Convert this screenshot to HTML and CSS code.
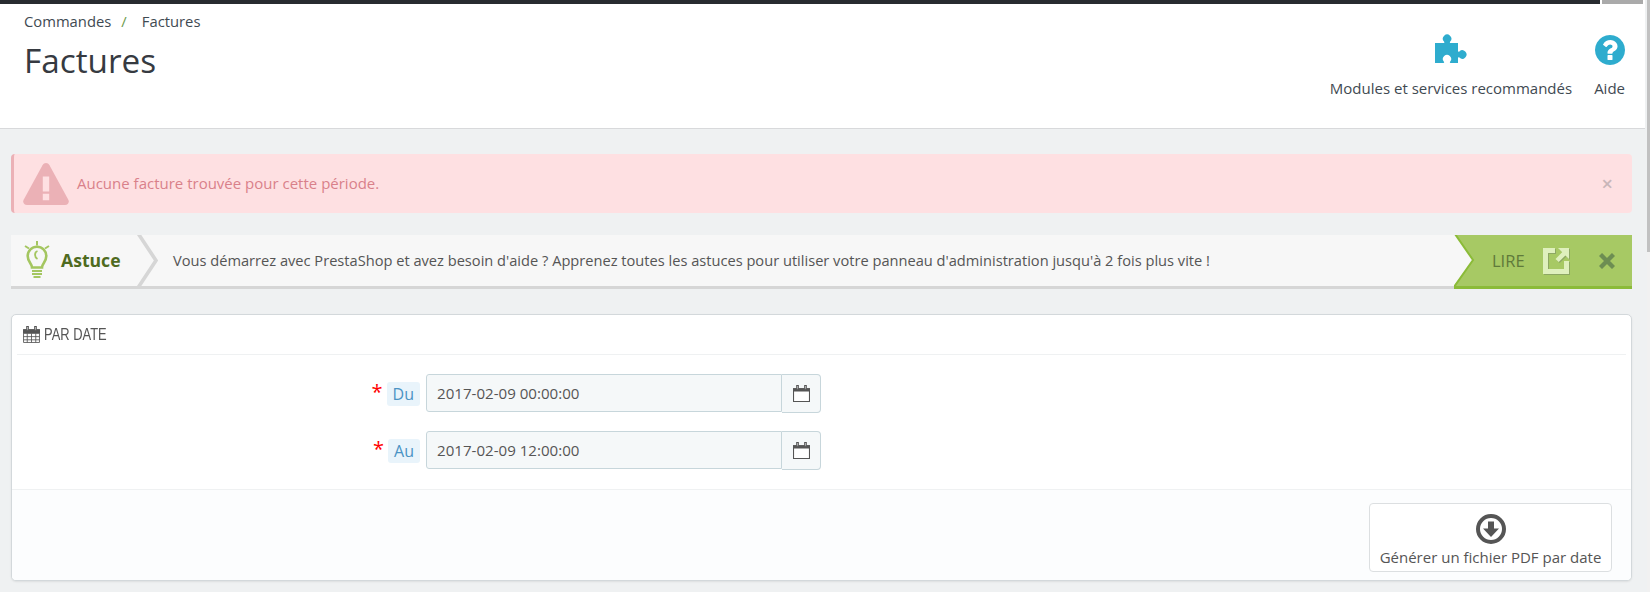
FILE: index.html
```html
<!DOCTYPE html>
<html lang="fr">
<head>
<meta charset="utf-8">
<title>Factures</title>
<link rel="stylesheet" href="styles.css">
</head>
<body>
<div class="app">
  <div class="page">
    <div class="topbar"><div class="topbar-dark"></div><div class="topbar-gray"></div></div>
    <header class="head">
      <div class="head-left">
        <nav class="crumbs"><span>Commandes</span><span class="crumb-sep">/</span><span>Factures</span></nav>
        <h1 class="title">Factures</h1>
      </div>
      <div class="head-actions">
        <a class="action action-modules">
          <svg class="icon-puzzle" viewBox="0 0 33 30"><path fill="#2eacce" d="M0 10h8.600c.8 0 1-.7.400-1.400a4.200 4.200 0 1 1 6.200 0c-.6.700-.4 1.400.4 1.400H23v8c0 .8.700 1 1.400.4a4.200 4.200 0 1 1 0 6.200c-.7-.6-1.400-.4-1.400.4V30h-7.400c-.8 0-1-.7-.5-1.300a4.100 4.100 0 1 0-6.200 0c.5.600.3 1.300-.5 1.300H0z"/></svg>
          <span>Modules et services recommandés</span>
        </a>
        <a class="action action-help">
          <svg class="icon-help" viewBox="128 128 1536 1536"><path fill="#2eacce" d="M1024 1376v-192q0-14-9-23t-23-9h-192q-14 0-23 9t-9 23v192q0 14 9 23t23 9h192q14 0 23-9t9-23zm256-672q0-88-55.500-163t-138.500-116-170-41q-243 0-371 213-15 24 8 42l132 100q7 6 19 6 16 0 25-12 53-68 86-92 34-24 86-24 48 0 85.500 26t37.500 59q0 38-20 61t-68 45q-63 28-115.500 86.500t-52.500 125.500v36q0 14 9 23t23 9h192q14 0 23-9t9-23q0-19 21.500-49.500t54.500-49.500q32-18 49-28.500t46-35 44.500-48 28-60.500 12.500-81zm384 192q0 209-103 385.500t-279.500 279.500-385.500 103-385.500-103-279.500-279.500-103-385.500 103-385.500 279.500-279.500 385.500-103 385.500 103 279.500 279.500 103 385.500z"/></svg>
          <span>Aide</span>
        </a>
      </div>
    </header>
    <main class="content">
      <div class="alert">
        <svg class="icon-warn" viewBox="0 0 46 42"><path fill="#ebb1b6" d="M19.500 2.200c1.700-2.900 5.300-2.900 7 0l18.700 34.200c1.500 2.800 0 5.600-3.200 5.600H4c-3.200 0-4.700-2.800-3.200-5.600z"/><path fill="#fee0e2" d="M19.800 13.500h6.400v15h-6.400zM19.800 30.800h6.400v6.400h-6.400z"/></svg>
        <span class="alert-text">Aucune facture trouvée pour cette période.</span>
        <span class="alert-close">×</span>
      </div>
      <div class="tip">
        <svg class="icon-bulb" viewBox="0 0 26 38">
          <g fill="none" stroke="#a4c660">
            <path stroke-width="2" d="M13 0v4.500M1 5l4 2.500M25 5l-4 2.500"/>
            <path stroke-width="2.600" d="M8 26.500c0-4-4.300-5.500-4.300-11.500a9.300 9.300 0 0 1 18.600 0c0 6-4.300 7.500-4.300 11.500z"/>
            <path stroke-width="1.800" d="M13.500 10c-3 1-3.500 6 0 8"/>
            <path stroke-width="2" d="M8 30h10M8 33h10M9.500 36h7"/>
          </g>
        </svg>
        <strong class="tip-label">Astuce</strong>
        <svg class="tip-chevron" viewBox="0 0 24 51"><path fill="none" stroke="#d6d6d6" stroke-width="3.600" d="M1.500-1 19 25.500 1.500 52"/></svg>
        <span class="tip-text">Vous démarrez avec PrestaShop et avez besoin d'aide ? Apprenez toutes les astuces pour utiliser votre panneau d'administration jusqu'à 2 fois plus vite !</span>
        <div class="tip-go">
          <svg class="tip-notch" viewBox="0 0 22 51"><path fill="#f7f7f7" d="M0 0h2l17 25L0 51z"/><path fill="none" stroke="#8bbb38" stroke-width="2" d="M1-1l18 26L0 52"/></svg>
          <span class="tip-read">LIRE</span>
          <svg class="icon-external" viewBox="0 0 26 26"><path fill="#dff0bd" d="M0 0h12v5H5v16h16v-8h5v13H0z"/><path fill="#dff0bd" d="M15 0h11v11l-3.600-3.600-6.700 6.700-3.200-3.200 6.700-6.700z"/></svg>
          <svg class="icon-times" viewBox="0 0 16 16"><path fill="none" stroke="#6d8d52" stroke-width="4.300" d="M1.500 1.500l13 13M14.500 1.500l-13 13"/></svg>
        </div>
      </div>
      <section class="panel">
        <div class="panel-head">
          <svg class="icon-cal" viewBox="0 0 16 16"><path fill="none" stroke="#555" stroke-width=".8" d="M.5 3.500h15v12H.5zM.5 7h15M.5 10h15M.5 13h15M4 7v8.500M8 7v8.500M12 7v8.500"/><path fill="#555" d="M0 3h16v3.500H0z"/><path fill="#fff" stroke="#555" d="M3.500.5h1.500v3.500H3.500zM11 .5h1.500v3.500H11z"/></svg>
          <span class="panel-title">PAR DATE</span>
        </div>
        <div class="form">
          <div class="row">
            <div class="row-label"><span class="req">*</span><span class="tag">Du</span></div>
            <div class="field"><span class="input">2017-02-09 00:00:00</span><span class="addon"><svg class="icon-day" viewBox="0 0 16 16"><path fill="#fff" stroke="#555" d="M.5 3.500h15v12H.5z"/><path fill="#555" d="M0 3h16v3H0z"/><path fill="#f5f8f9" stroke="#555" d="M3.500.5h1.500v3.500H3.500zM11 .5h1.500v3.500H11z"/></svg></span></div>
          </div>
          <div class="row">
            <div class="row-label"><span class="req">*</span><span class="tag">Au</span></div>
            <div class="field"><span class="input">2017-02-09 12:00:00</span><span class="addon"><svg class="icon-day" viewBox="0 0 16 16"><path fill="#fff" stroke="#555" d="M.5 3.500h15v12H.5z"/><path fill="#555" d="M0 3h16v3H0z"/><path fill="#f5f8f9" stroke="#555" d="M3.500.5h1.500v3.500H3.500zM11 .5h1.500v3.500H11z"/></svg></span></div>
          </div>
        </div>
        <div class="panel-foot">
          <button class="gen">
            <svg class="icon-down" viewBox="0 0 30 30"><circle cx="15" cy="15" r="13" fill="none" stroke="#555" stroke-width="4"/><path fill="#555" d="M12 7.500h6v7h5L15 23l-8-8.500h5z"/></svg>
            <span>Générer un fichier PDF par date</span>
          </button>
        </div>
      </section>
    </main>
  </div>
  <div class="scrollbar"><div class="thumb"></div></div>
</div>
</body>
</html>
```
FILE: styles.css
```css
* { box-sizing: border-box; }
html, body { margin: 0; padding: 0; height: 592px; overflow: hidden; }
body { font-family: "Open Sans", sans-serif; font-size: 14px; color: #555; background: #f1f1f1; }
svg { display: block; flex: none; }

.app { display: flex; height: 592px; }
.page { width: 1647px; flex: none; background: #eff1f2; height: 592px; overflow: hidden; }
.scrollbar { width: 3px; flex: none; background: #f1f1f1; }
.thumb { height: 252px; background: #c1c1c1; }

.topbar { display: flex; height: 4px; background: #fff; margin-right: 2px; }
.topbar-dark { width: 1600px; background: #282b30; }
.topbar-gray { width: 41px; margin-left: 2px; background: #aaa; }

.head { display: flex; justify-content: space-between; height: 125px; margin-right: 2px; background: #fff; border-bottom: 1px solid #d8d9db; padding-left: 24px; }
.crumbs { display: flex; font-size: 14.800px; line-height: 20px; margin-top: 7px; color: #3f4a52; }
.crumb-sep { color: #6c9a4b; margin: 0 15px 0 10px; }
.title { margin: 7px 0 0; font-size: 33.300px; line-height: 44px; font-weight: 400; color: #363a41; }
.head-actions { display: flex; padding-right: 20px; padding-top: 29px; gap: 22px; }
.action { display: flex; flex-direction: column; align-items: center; font-size: 15px; color: #3f4a52; }
.action span { margin-top: 15px; line-height: 20px; }
.icon-puzzle { width: 33px; height: 30px; margin-left: 2px; }
.icon-help { width: 30px; height: 30px; margin-top: 2px; }
.action-help span { margin-top: 13px; }

.content { padding: 25px 15px 0 11px; }
.alert { display: flex; align-items: center; height: 59px; background: #fee0e2; border-left: 3px solid #ebb1b6; border-radius: 4px; padding: 0 15px 0 9px; }
.icon-warn { width: 46px; height: 42px; }
.alert-text { margin: -2px 0 0 8px; font-size: 15px; color: #d9808a; flex: 1; }
.alert-close { font-size: 20px; line-height: 20px; color: #c9b6b9; font-weight: 600; margin-right: 4px; }

.tip { display: flex; align-items: stretch; height: 54px; margin-top: 22px; background: #f7f7f7; border-bottom: 3px solid #d6d6d6; }
.icon-bulb { width: 26px; height: 38px; margin: 6px 0 0 13px; }
.tip-label { margin-left: 11px; width: 76px; line-height: 51px; font-size: 17.600px; color: #4f6b1f; white-space: nowrap; }
.tip-chevron { width: 24px; height: 51px; }
.tip-text { flex: 1; margin-left: 12px; line-height: 51px; font-size: 14.640px; color: #555; white-space: nowrap; }
.tip-go { display: flex; align-items: center; width: 178px; height: 54px; background: #a7c964; border-bottom: 3px solid #8bbb38; flex: none; }
.tip-notch { width: 22px; height: 51px; }
.tip-read { margin-left: 16px; width: 34px; font-size: 16.500px; color: #5f7a3a; }
.icon-external { width: 26px; height: 26px; margin-left: 17px; filter: drop-shadow(1px 1px 0 #8da763); }
.icon-times { width: 16px; height: 16px; margin-left: 30px; }

.panel { margin-top: 25px; height: 267px; background: #fff; border: 1px solid #d3d8db; border-radius: 5px; box-shadow: 0 1px 2px rgba(0,0,0,.08); overflow: hidden; }
.panel-head { display: flex; align-items: center; gap: 4px; height: 40px; margin: 0 5px; padding-left: 6px; border-bottom: 1px solid #eff1f2; }
.icon-cal { width: 17px; height: 17px; }
.panel-title { font-family: "Liberation Sans", sans-serif; font-size: 17px; color: #555; transform: scaleX(.76); transform-origin: left center; }
.form { height: 134px; padding-top: 19px; display: flex; flex-direction: column; gap: 18px; }
.row { display: flex; gap: 6px; height: 39px; }
.row-label { width: 408px; display: flex; justify-content: flex-end; align-items: center; gap: 4px; }
.req { color: #f00; font-size: 20px; line-height: 20px; margin-top: -4px; }
.tag { background: #e9f4fb; color: #4a93c4; border-radius: 3px; padding: 1px 6px 0; line-height: 23px; font-size: 16px; }
.field { display: flex; width: 395px; }
.input { width: 356px; height: 38px; padding-left: 10px; line-height: 36px; font-size: 15.100px; background: #f5f8f9; border: 1px solid #c7d6db; border-radius: 3px 0 0 3px; color: #555; }
.addon { width: 39px; height: 39px; display: flex; align-items: center; justify-content: center; background: #f5f8f9; border: 1px solid #c7d6db; border-left: 0; border-radius: 0 4px 4px 0; }
.icon-day { width: 17px; height: 17px; }
.panel-foot { height: 91px; display: flex; justify-content: flex-end; padding: 13px 19px 0 0; background: #fcfdfe; border-top: 1px solid #eff1f2; }
.gen { width: 243px; height: 69px; display: flex; flex-direction: column; align-items: center; padding: 10px 0 0; background: #fff; border: 1px solid #dcdfe1; border-radius: 4px; font-family: inherit; font-size: 15px; color: #555; }
.icon-down { width: 30px; height: 30px; }
.gen span { line-height: 20px; margin-top: 3px; white-space: nowrap; }
```
